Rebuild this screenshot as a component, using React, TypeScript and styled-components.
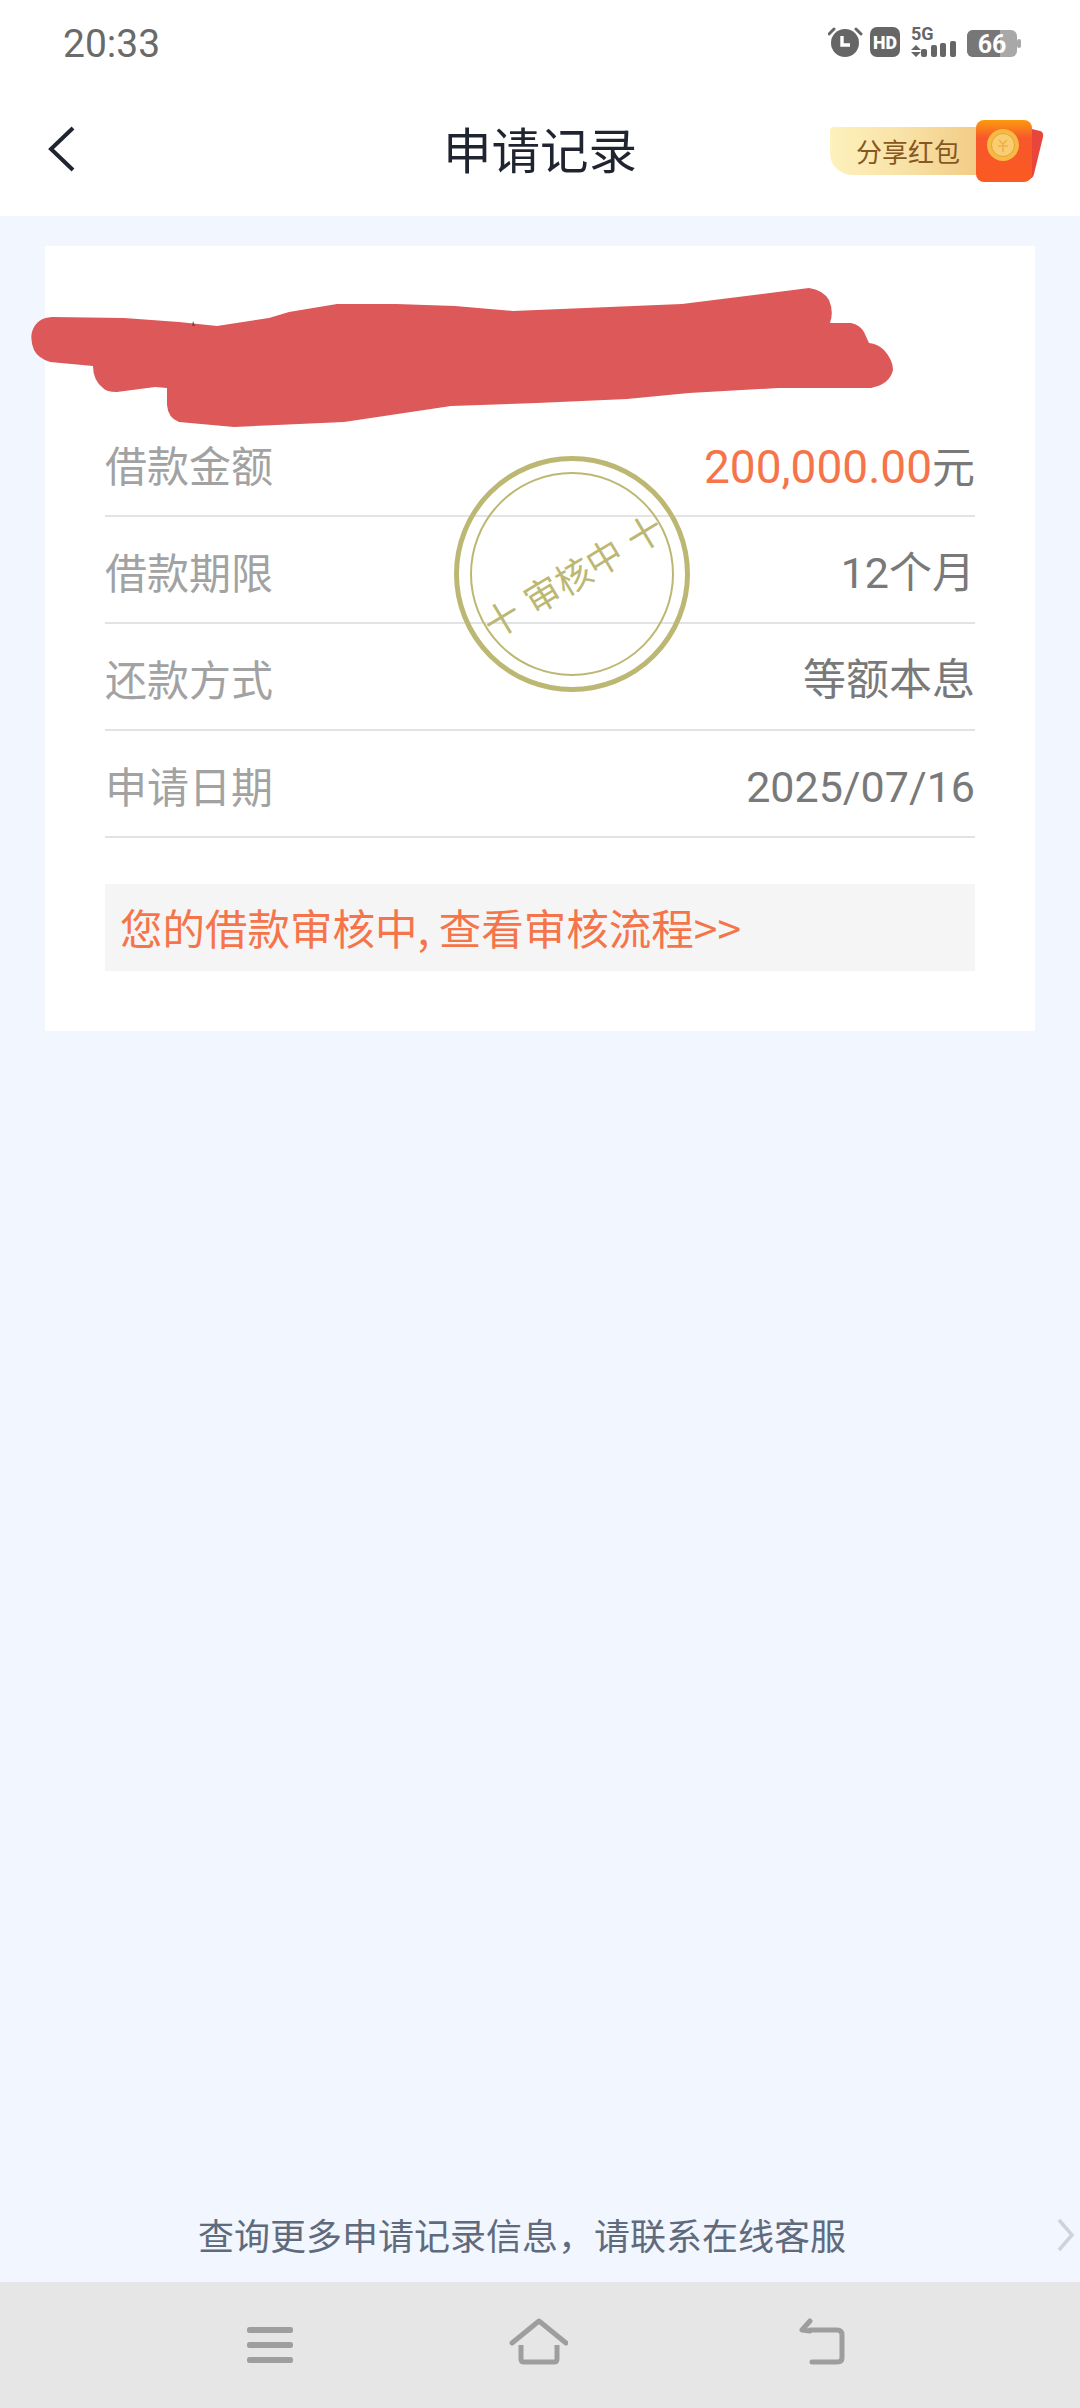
import React from "react";
import styled, { createGlobalStyle } from "styled-components";

const cjk = `"Noto Sans CJK SC", "Noto Sans", sans-serif`;
const latin = `Roboto, "Noto Sans CJK SC", sans-serif`;

const Global = createGlobalStyle`
  html, body { margin: 0; padding: 0; background: #f2f6fe; }
  * { box-sizing: border-box; }
`;

const Page = styled.div`
  width: 1080px;
  height: 2408px;
  display: flex;
  flex-direction: column;
  background: #f2f6fe;
  font-family: ${cjk};
  overflow: hidden;
`;

const Top = styled.header`
  background: #fff;
  height: 216px;
  flex: none;
  display: flex;
  flex-direction: column;
`;

const StatusBar = styled.div`
  height: 90px;
  padding: 0 59px 8px 63px;
  display: flex;
  align-items: center;
  justify-content: space-between;
`;

const Time = styled.span`
  margin-top: 6px;
  font: 400 39px/1 ${latin};
  color: #6a6a6a;
`;

const StatusIcons = styled.svg`
  width: 193px;
  height: 34px;
  display: block;
`;

const NavBar = styled.div`
  flex: 1;
  display: grid;
  grid-template-columns: 1fr auto 1fr;
  align-items: center;
  padding: 0 36px;
`;

const BackIcon = styled.svg`
  width: 28px;
  height: 46px;
  margin-left: 12px;
  display: block;
  margin-bottom: 8px;
`;

const Title = styled.h1`
  margin: 0 0 10px;
  font: 400 48.5px/1 ${cjk};
  color: #1f2430;
`;

const Share = styled.div`
  justify-self: end;
  position: relative;
  width: 214px;
  height: 64px;
  margin-bottom: 4px;
  display: flex;
  align-items: center;
`;

const ShareLabel = styled.span`
  width: 148px;
  height: 48px;
  padding: 0 0 0 26px;
  display: flex;
  align-items: center;
  background: linear-gradient(90deg, #fdf1bd 0%, #f9e2a6 50%, #f1cc86 100%);
  border-radius: 4px 0 0 22px;
  font: 400 26px/1 ${cjk};
  color: #86581f;
`;

const Packet = styled.svg`
  position: absolute;
  left: 144px;
  top: 0;
  width: 70px;
  height: 64px;
`;

const Main = styled.main`
  flex: 1;
  padding: 30px 45px 0;
`;

const Card = styled.section`
  position: relative;
  height: 785px;
  background: #fff;
  padding: 164px 60px 0;
`;

const Row = styled.div`
  height: 107px;
  padding-top: 8px;
  display: flex;
  align-items: center;
  justify-content: space-between;
  border-bottom: 2px solid #e1e3e7;
`;

const Label = styled.span`
  margin-bottom: 6px;
  font: 400 42px/1 ${cjk};
  color: #a2a2a2;
`;

const Value = styled.span`
  font: 400 43px/1 ${latin};
  color: #797979;
`;

const Amount = styled.span`
  font-size: 46px;
  color: #f5744a;
`;

const Notice = styled.div`
  margin-top: 46px;
  height: 87px;
  padding: 0 0 0 15px;
  display: flex;
  align-items: center;
  background: #f5f5f5;
  font: 400 42.5px/1 ${cjk};
  color: #f5744a;
  white-space: pre;
`;

const Stamp = styled.div`
  position: absolute;
  left: 409px;
  top: 210px;
  width: 236px;
  height: 236px;
  border-radius: 50%;
  border: 5px solid #bcb873;
  display: flex;
  align-items: center;
  justify-content: center;
`;

const StampInner = styled.div`
  width: 204px;
  height: 204px;
  border-radius: 50%;
  border: 2px solid #bcb873;
  display: flex;
  align-items: center;
  justify-content: center;
`;

const StampText = styled.span`
  transform: rotate(-31deg);
  font: 400 36px/1 ${cjk};
  color: #bcb873;
  white-space: pre;
  word-spacing: 3px;
`;

const Redaction = styled.svg`
  position: absolute;
  left: -45px;
  top: -246px;
  width: 1080px;
  height: 700px;
  pointer-events: none;
`;

const FooterLink = styled.div`
  position: relative;
  flex: none;
  height: 96px;
  padding-right: 36px;
  display: flex;
  align-items: center;
  justify-content: center;
  font: 400 36px/1 ${cjk};
  color: #5f6b7d;
`;

const FooterChevron = styled.svg`
  position: absolute;
  left: 1056px;
  top: 32px;
  width: 20px;
  height: 34px;
`;

const SystemNav = styled.nav`
  flex: none;
  height: 126px;
  background: #e6e6e6;
  display: grid;
  grid-template-columns: 60px 60px 80px;
  column-gap: 208px;
  padding: 36px 0 0 240px;
`;

const NavIcon = styled.svg`
  height: 48px;
  display: block;
`;

const redaction =
  "M52 317L124 318L179 322L217 326L269 318L289 312L337 304L396 304L455 306L513 311L682 304L809 288Q823 290 829 300Q834 312 830 323L851 323Q860 325 864 332L869 343Q878 344 884 350Q893 360 893 370Q890 384 871 388L778 388L689 393L627 399L537 403L451 406L344 422L234 427L179 422Q168 418 167 405L167 388L155 387L117 392Q106 392 103 388Q93 380 93 366L50 362Q38 358 34 350Q30 340 32 332Q36 318 52 317Z";

const InfoRow = ({ label, children }: { label: string; children: React.ReactNode }) => (
  <Row>
    <Label>{label}</Label>
    <Value>{children}</Value>
  </Row>
);

export default function App() {
  return (
    <Page>
      <Global />
      <Top>
        <StatusBar>
          <Time>20:33</Time>
          <StatusIcons viewBox="0 0 193 34">
            {/* alarm */}
            <circle cx="17" cy="19" r="14" fill="#666" />
            <path d="M6 5 L1 10 M28 5 L33 10" stroke="#666" strokeWidth="3" strokeLinecap="round" />
            <path d="M14 12v9h8" stroke="#fff" strokeWidth="3.4" fill="none" />
            {/* HD */}
            <rect x="42" y="3" width="30" height="30" rx="7" fill="#666" />
            <text x="57" y="25" textAnchor="middle" fontFamily="Roboto, sans-serif" fontWeight="900" fontSize="19" fill="#fff" textLength="24" lengthAdjust="spacingAndGlyphs">HD</text>
            {/* 5G signal */}
            <text x="83" y="16" fontFamily="Roboto, sans-serif" fontWeight="700" fontSize="18" fill="#666">5G</text>
            <path d="M83 26l5-5 5 5zM83 28l5 5 5-5z" fill="#666" />
            <rect x="93" y="25" width="6" height="8" rx="2" fill="#666" />
            <rect x="103" y="21" width="6" height="12" rx="2" fill="#666" />
            <rect x="112" y="19" width="6" height="14" rx="2" fill="#666" />
            <rect x="122" y="17" width="6" height="16" rx="2" fill="#666" />
            {/* battery */}
            <rect x="139" y="6" width="50" height="27" rx="6" fill="#a8a8a8" />
            <path d="M145 6h27v27h-27a6 6 0 0 1-6-6v-15a6 6 0 0 1 6-6z" fill="#777" />
            <rect x="189" y="15" width="4" height="9" rx="2" fill="#a8a8a8" />
            <text x="164" y="29" textAnchor="middle" fontFamily="Roboto, sans-serif" fontWeight="700" fontSize="25" fill="#fff">66</text>
          </StatusIcons>
        </StatusBar>
        <NavBar>
          <BackIcon viewBox="0 0 28 46">
            <path d="M25 2L3 23l22 21" fill="none" stroke="#1f2430" strokeWidth="4" />
          </BackIcon>
          <Title>申请记录</Title>
          <Share>
            <ShareLabel>分享红包</ShareLabel>
            <Packet viewBox="0 0 70 64">
              <defs>
                <linearGradient id="packetFront" x1="0" y1="0" x2="0" y2="1">
                  <stop offset="0" stopColor="#fb9a10" />
                  <stop offset="0.3" stopColor="#f7572b" />
                  <stop offset="1" stopColor="#fb5a22" />
                </linearGradient>
              </defs>
              <path d="M50 8L66 12Q70 13 69 18L60 55Q59 60 54 60H40z" fill="#e8463a" />
              <rect x="2" y="1" width="56" height="62" rx="8" fill="url(#packetFront)" />
              <circle cx="29" cy="26" r="16" fill="#f6bb45" />
              <circle cx="29" cy="26" r="11.5" fill="#f9cd72" stroke="#eaa233" strokeWidth="1" />
              <path d="M25 21l4 4 4-4M29 25v8M24 27h10" stroke="#f0b04a" strokeWidth="1.6" fill="none" />
            </Packet>
          </Share>
        </NavBar>
      </Top>
      <Main>
        <Card>
          <InfoRow label="借款金额"><Amount>200,000.00</Amount>元</InfoRow>
          <InfoRow label="借款期限">12个月</InfoRow>
          <InfoRow label="还款方式">等额本息</InfoRow>
          <InfoRow label="申请日期">2025/07/16</InfoRow>
          <Notice>您的借款审核中, 查看审核流程&gt;&gt;</Notice>
          <Stamp>
            <StampInner>
              <StampText>十 审核中 十</StampText>
            </StampInner>
          </Stamp>
          <Redaction viewBox="0 0 1080 700">
            <path d={redaction} fill="#dc5859" />
            <path d="M193 321l2 5-3 0z" fill="#6b4a4a" />
          </Redaction>
        </Card>
      </Main>
      <FooterLink>
        查询更多申请记录信息，请联系在线客服
        <FooterChevron viewBox="0 0 20 34">
          <path d="M3 2l13 15L3 32" fill="none" stroke="#ccd3de" strokeWidth="3.5" />
        </FooterChevron>
      </FooterLink>
      <SystemNav>
        <NavIcon width="60" viewBox="0 0 60 48">
          <rect x="7" y="9" width="46" height="6" rx="2.5" fill="#9e9e9e" />
          <rect x="7" y="24" width="46" height="6" rx="2.5" fill="#9e9e9e" />
          <rect x="7" y="39" width="46" height="6" rx="2.5" fill="#9e9e9e" />
        </NavIcon>
        <NavIcon width="60" viewBox="0 0 60 48">
          <path d="M4 25L31 3l27 22" fill="none" stroke="#9e9e9e" strokeWidth="5" strokeLinecap="round" strokeLinejoin="round" />
          <path d="M13 27v14q0 3 3 3h30q3 0 3-3V27" fill="none" stroke="#9e9e9e" strokeWidth="5" />
        </NavIcon>
        <NavIcon width="80" viewBox="0 0 80 48">
          <path d="M34 3l-8 9 8 1v-1h27q5 0 5 5v23q0 4-5 4H36" fill="none" stroke="#9e9e9e" strokeWidth="5" strokeLinecap="round" strokeLinejoin="round" />
        </NavIcon>
      </SystemNav>
    </Page>
  );
}
